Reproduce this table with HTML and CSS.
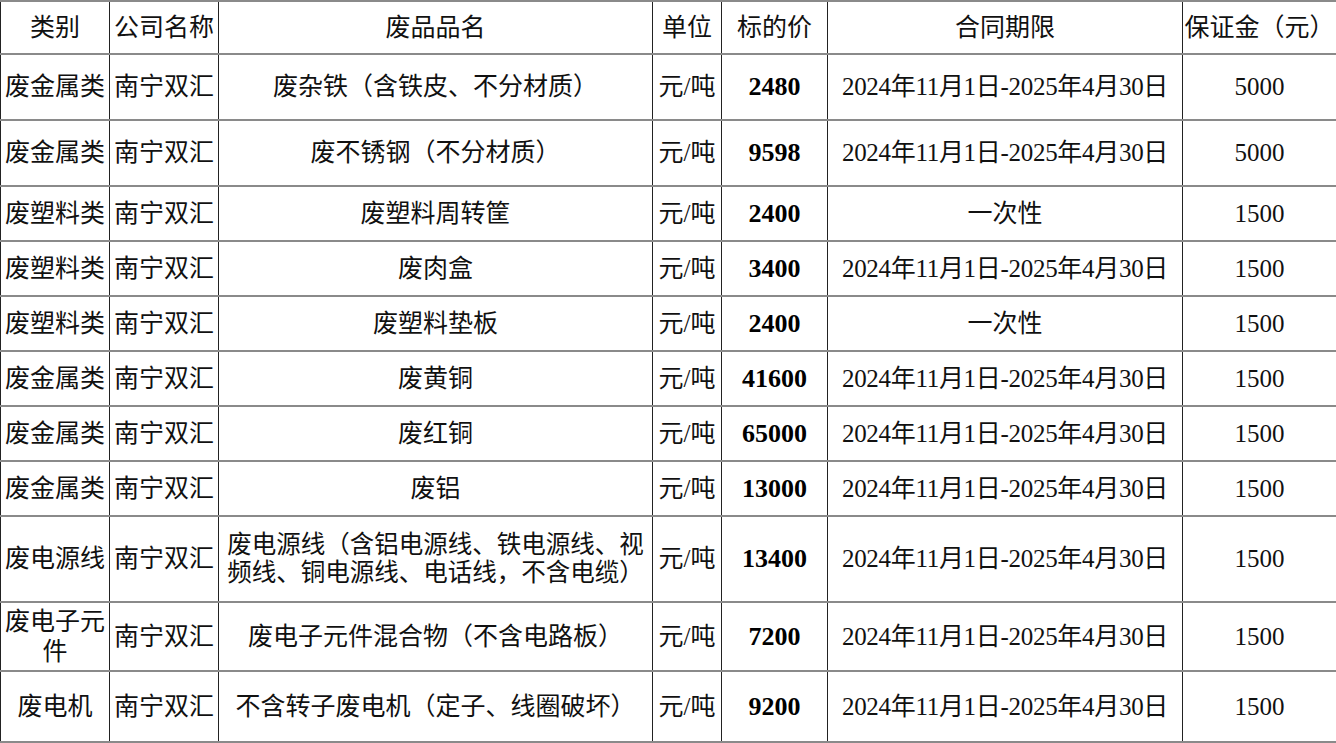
FILE: index.html
```html
<!DOCTYPE html>
<html lang="zh-CN">
<head>
<meta charset="utf-8">
<title>废品标的价</title>
<link rel="stylesheet" href="styles.css">
</head>
<body>
<table class="sheet">
  <colgroup>
    <col class="c-cat"><col class="c-co"><col class="c-name"><col class="c-unit"><col class="c-price"><col class="c-term"><col class="c-dep">
  </colgroup>
  <thead>
    <tr class="r-head">
      <th>类别</th><th>公司名称</th><th>废品品名</th><th>单位</th><th>标的价</th><th>合同期限</th><th>保证金（元）</th>
    </tr>
  </thead>
  <tbody>
    <tr class="r-tall"><td>废金属类</td><td>南宁双汇</td><td>废杂铁（含铁皮、不分材质）</td><td>元/吨</td><td class="price">2480</td><td class="term">2024年11月1日-2025年4月30日</td><td>5000</td></tr>
    <tr class="r-tall"><td>废金属类</td><td>南宁双汇</td><td>废不锈钢（不分材质）</td><td>元/吨</td><td class="price">9598</td><td class="term">2024年11月1日-2025年4月30日</td><td>5000</td></tr>
    <tr class="r-std"><td>废塑料类</td><td>南宁双汇</td><td>废塑料周转筐</td><td>元/吨</td><td class="price">2400</td><td>一次性</td><td>1500</td></tr>
    <tr class="r-std"><td>废塑料类</td><td>南宁双汇</td><td>废肉盒</td><td>元/吨</td><td class="price">3400</td><td class="term">2024年11月1日-2025年4月30日</td><td>1500</td></tr>
    <tr class="r-std"><td>废塑料类</td><td>南宁双汇</td><td>废塑料垫板</td><td>元/吨</td><td class="price">2400</td><td>一次性</td><td>1500</td></tr>
    <tr class="r-std"><td>废金属类</td><td>南宁双汇</td><td>废黄铜</td><td>元/吨</td><td class="price">41600</td><td class="term">2024年11月1日-2025年4月30日</td><td>1500</td></tr>
    <tr class="r-std"><td>废金属类</td><td>南宁双汇</td><td>废红铜</td><td>元/吨</td><td class="price">65000</td><td class="term">2024年11月1日-2025年4月30日</td><td>1500</td></tr>
    <tr class="r-std"><td>废金属类</td><td>南宁双汇</td><td>废铝</td><td>元/吨</td><td class="price">13000</td><td class="term">2024年11月1日-2025年4月30日</td><td>1500</td></tr>
    <tr class="r-wire"><td>废电源线</td><td>南宁双汇</td><td class="nowrap">废电源线（含铝电源线、铁电源线、视<br>频线、铜电源线、电话线，不含电缆）</td><td>元/吨</td><td class="price">13400</td><td class="term">2024年11月1日-2025年4月30日</td><td>1500</td></tr>
    <tr class="r-elec"><td>废电子元件</td><td>南宁双汇</td><td>废电子元件混合物（不含电路板）</td><td>元/吨</td><td class="price">7200</td><td class="term">2024年11月1日-2025年4月30日</td><td>1500</td></tr>
    <tr class="r-motor"><td>废电机</td><td>南宁双汇</td><td>不含转子废电机（定子、线圈破坏）</td><td>元/吨</td><td class="price">9200</td><td class="term">2024年11月1日-2025年4月30日</td><td>1500</td></tr>
  </tbody>
</table>
</body>
</html>
```

FILE: styles.css
```css
html, body {
  margin: 0;
  padding: 0;
  background: #ffffff;
}

body {
  font-family: "Liberation Serif", "Noto Sans CJK SC", serif;
  font-size: 25px;
  color: #111111;
}

.sheet {
  width: 1336px;
  table-layout: fixed;
  border-collapse: collapse;
}

.c-cat { width: 109px; }
.c-co { width: 109px; }
.c-name { width: 434px; }
.c-unit { width: 69px; }
.c-price { width: 106px; }
.c-term { width: 355px; }
.c-dep { width: 154px; }

.sheet th,
.sheet td {
  font-weight: normal;
  text-align: center;
  vertical-align: middle;
  padding: 0;
  line-height: 30px;
  border-left: 1px solid #222222;
  border-right: 1px solid #222222;
  border-top: 2px solid #8a8a8a;
  border-bottom: 2px solid #8a8a8a;
  overflow: hidden;
}

.sheet .price {
  font-weight: bold;
  font-size: 26px;
  color: #000000;
}

.sheet .term {
  letter-spacing: -0.3px;
}

.sheet .nowrap {
  white-space: nowrap;
  font-size: 24.5px;
  line-height: 28px;
}

.r-head { height: 53px; }
.r-tall { height: 66px; }
.r-std { height: 55px; }
.r-wire { height: 86px; }
.r-elec { height: 69px; }
.r-motor { height: 71px; }
```
